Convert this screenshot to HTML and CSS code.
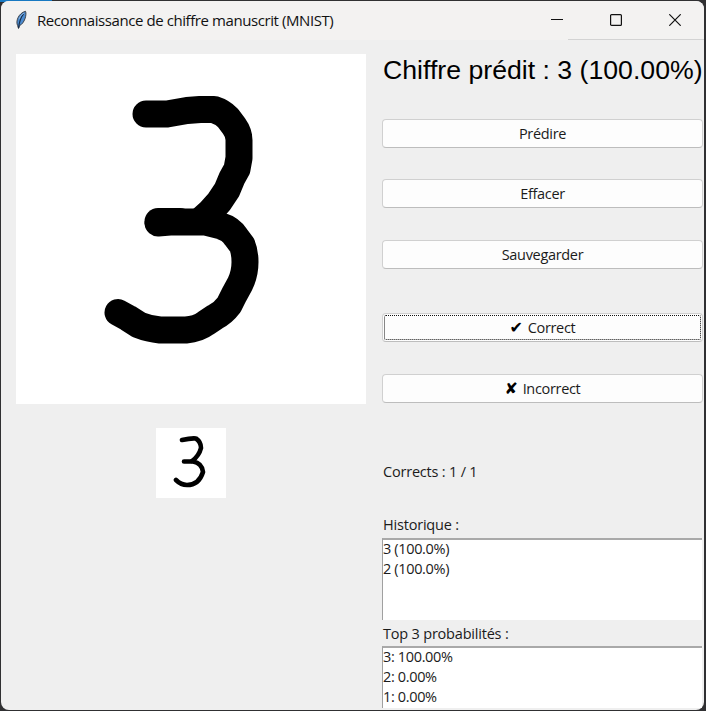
FILE: index.html
```html
<!DOCTYPE html>
<html lang="fr">
<head>
<meta charset="utf-8">
<title>Reconnaissance de chiffre manuscrit (MNIST)</title>
<link rel="stylesheet" href="styles.css">
</head>
<body>
<div class="window">
  <header class="titlebar">
    <svg class="feather" width="14" height="20" viewBox="0 0 14 20">
      <path d="M4.500 18.500 3.600 15.500C1.500 11.500 4.300 3.200 11.500 1.300 13 4.500 10.500 13.500 5.500 15.600Z" fill="#4b8bd0" stroke="#3c4048" stroke-width="1"/>
      <path d="M9.500 4Q5.500 9 4.600 18" fill="none" stroke="#142b48" stroke-width="1.200"/>
      <path d="M10 3Q6.500 5 5 9" fill="none" stroke="#9cbce0" stroke-width=".8"/>
    </svg>
    <span class="title">Reconnaissance de chiffre manuscrit (MNIST)</span>
    <div class="controls">
      <svg width="12" height="12" viewBox="0 0 12 12"><path d="M0 5.5H12"/></svg>
      <svg width="12" height="12" viewBox="0 0 12 12"><rect x=".6" y=".6" width="10.8" height="10.8" rx="1"/></svg>
      <svg width="12" height="12" viewBox="0 0 12 12"><path d="M.3.3 11.7 11.7M11.7.3.3 11.7"/></svg>
    </div>
  </header>
  <main class="content">
    <section class="left">
      <svg class="canvas" width="350" height="350" viewBox="16 54 350 350">
        <g class="ink">
          <path d="M146 114H167L187 110.500L200 109.500H214Q222 112 228 118L234 126Q239 133 239 140V158L237 169L232 178L227 190L219 202L210 212L200 221"/>
          <path d="M158 223L170 222H190L205 222L221 226Q231 229 236 237L242 245Q245 252 245 262Q245 274 240 284L234 295L229 305Q223 313 215 317L206 323Q198 329 186 330H160Q149 329 139 325L128 318L118 312.500"/>
          <path d="M158 221.500H180"/>
        </g>
      </svg>
      <svg class="preview" width="70" height="70" viewBox="156 428 70 70">
        <g class="ink small">
          <path d="M182 440Q191 438 196 438.500Q201 442 201 448Q199 456 192 461"/>
          <path d="M184 461.500H193Q202 463 203 472Q199 485 187 485Q181 485 176 480"/>
        </g>
      </svg>
    </section>
    <section class="right">
      <h1 class="result"><span>Chiffre prédit : 3 (100.00%)</span></h1>
      <button class="btn predict">Prédire</button>
      <button class="btn clear">Effacer</button>
      <button class="btn save">Sauvegarder</button>
      <button class="btn correct"><span class="mark">✔</span>Correct</button>
      <button class="btn incorrect"><span class="mark">✘</span>Incorrect</button>
      <div class="label score">Corrects : 1 / 1</div>
      <div class="label history-label">Historique :</div>
      <ul class="list history"><li>3 (100.0%)</li><li>2 (100.0%)</li></ul>
      <div class="label top-label">Top 3 probabilités :</div>
      <ul class="list top"><li>3: 100.00%</li><li>2: 0.00%</li><li>1: 0.00%</li></ul>
    </section>
  </main>
</div>
</body>
</html>
```
FILE: styles.css
```css
* { box-sizing: border-box; }
body {
  margin: 0;
  width: 706px;
  height: 711px;
  padding: 1px 2px 1px 1px;
  overflow: hidden;
  background: linear-gradient(90deg, #1879c2 52px, transparent 52px) top / 100% 2px no-repeat, #303032;
  font: 14.5px/20px "Open Sans", "Noto Sans", sans-serif;
  color: #1b1b1b;
}
.window {
  height: 709px;
  background: #efefef;
  border-radius: 8px;
  overflow: hidden;
}
.titlebar {
  display: flex;
  align-items: center;
  height: 39px;
  padding: 0 23px 2px 13px;
  background: linear-gradient(90deg, transparent 567px, #d3d3d3 567px) bottom / 100% 1px no-repeat, #f3f2f1;
}
.title {
  margin-left: 9px;
  font-size: 15px;
  letter-spacing: -0.42px;
  white-space: nowrap;
  color: #111;
}
.controls { display: flex; gap: 47px; margin-left: auto; }
.controls svg { fill: none; stroke: #111; stroke-width: 1.2; }
.content { display: flex; gap: 16px; padding-left: 15px; }
.left { width: 350px; padding-top: 14px; }
.canvas { display: block; background: #fff; }
.preview { display: block; margin: 24px 0 0 140px; background: #fff; }
.ink { fill: none; stroke: #000; stroke-width: 27px; stroke-linecap: round; stroke-linejoin: round; }
.small { stroke-width: 4.6px; filter: blur(.7px); }
.right { width: 321px; display: flex; flex-direction: column; }
.result {
  margin: 14px 0 1px 1px;
  height: 32px;
  font: 26.67px/32px "Liberation Sans", Arial, sans-serif;
  white-space: nowrap;
  color: #000;
}
.btn {
  display: flex;
  align-items: center;
  justify-content: center;
  flex: none;
  width: 321px;
  height: 29px;
  padding: 1px 0 0;
  border: 1px solid #d0d0d0;
  border-bottom-color: #bdbdbd;
  border-radius: 4px;
  background: #fdfdfd;
  color: #1b1b1b;
  font: 14.5px/20px "Open Sans", "Noto Sans", sans-serif;
  letter-spacing: -0.32px;
}
.predict { margin-top: 32px; }
.clear { margin-top: 31px; }
.save { margin-top: 32px; }
.correct { margin-top: 44px; padding-top: 0; outline: 1px dotted #111; outline-offset: -3px; }
.incorrect { margin-top: 32px; }
.mark { margin-right: 5px; font: 16px/20px "DejaVu Sans", sans-serif; color: #000; }
.label { height: 20px; padding-left: 1px; letter-spacing: -0.2px; white-space: nowrap; }
.score { margin-top: 59px; }
.history-label { margin-top: 33px; }
.list {
  width: 320px;
  margin: 3px 0 0;
  padding: 0;
  list-style: none;
  border-top: 2px solid #a9a9a9;
  border-left: 1px solid #a0a0a0;
  background: #fff;
  letter-spacing: -0.35px;
}
.list li:first-child { margin-top: -1px; }
.history { height: 82px; }
.top-label { margin-top: 4px; }
.top { height: 62px; margin-top: 2px; }
```
